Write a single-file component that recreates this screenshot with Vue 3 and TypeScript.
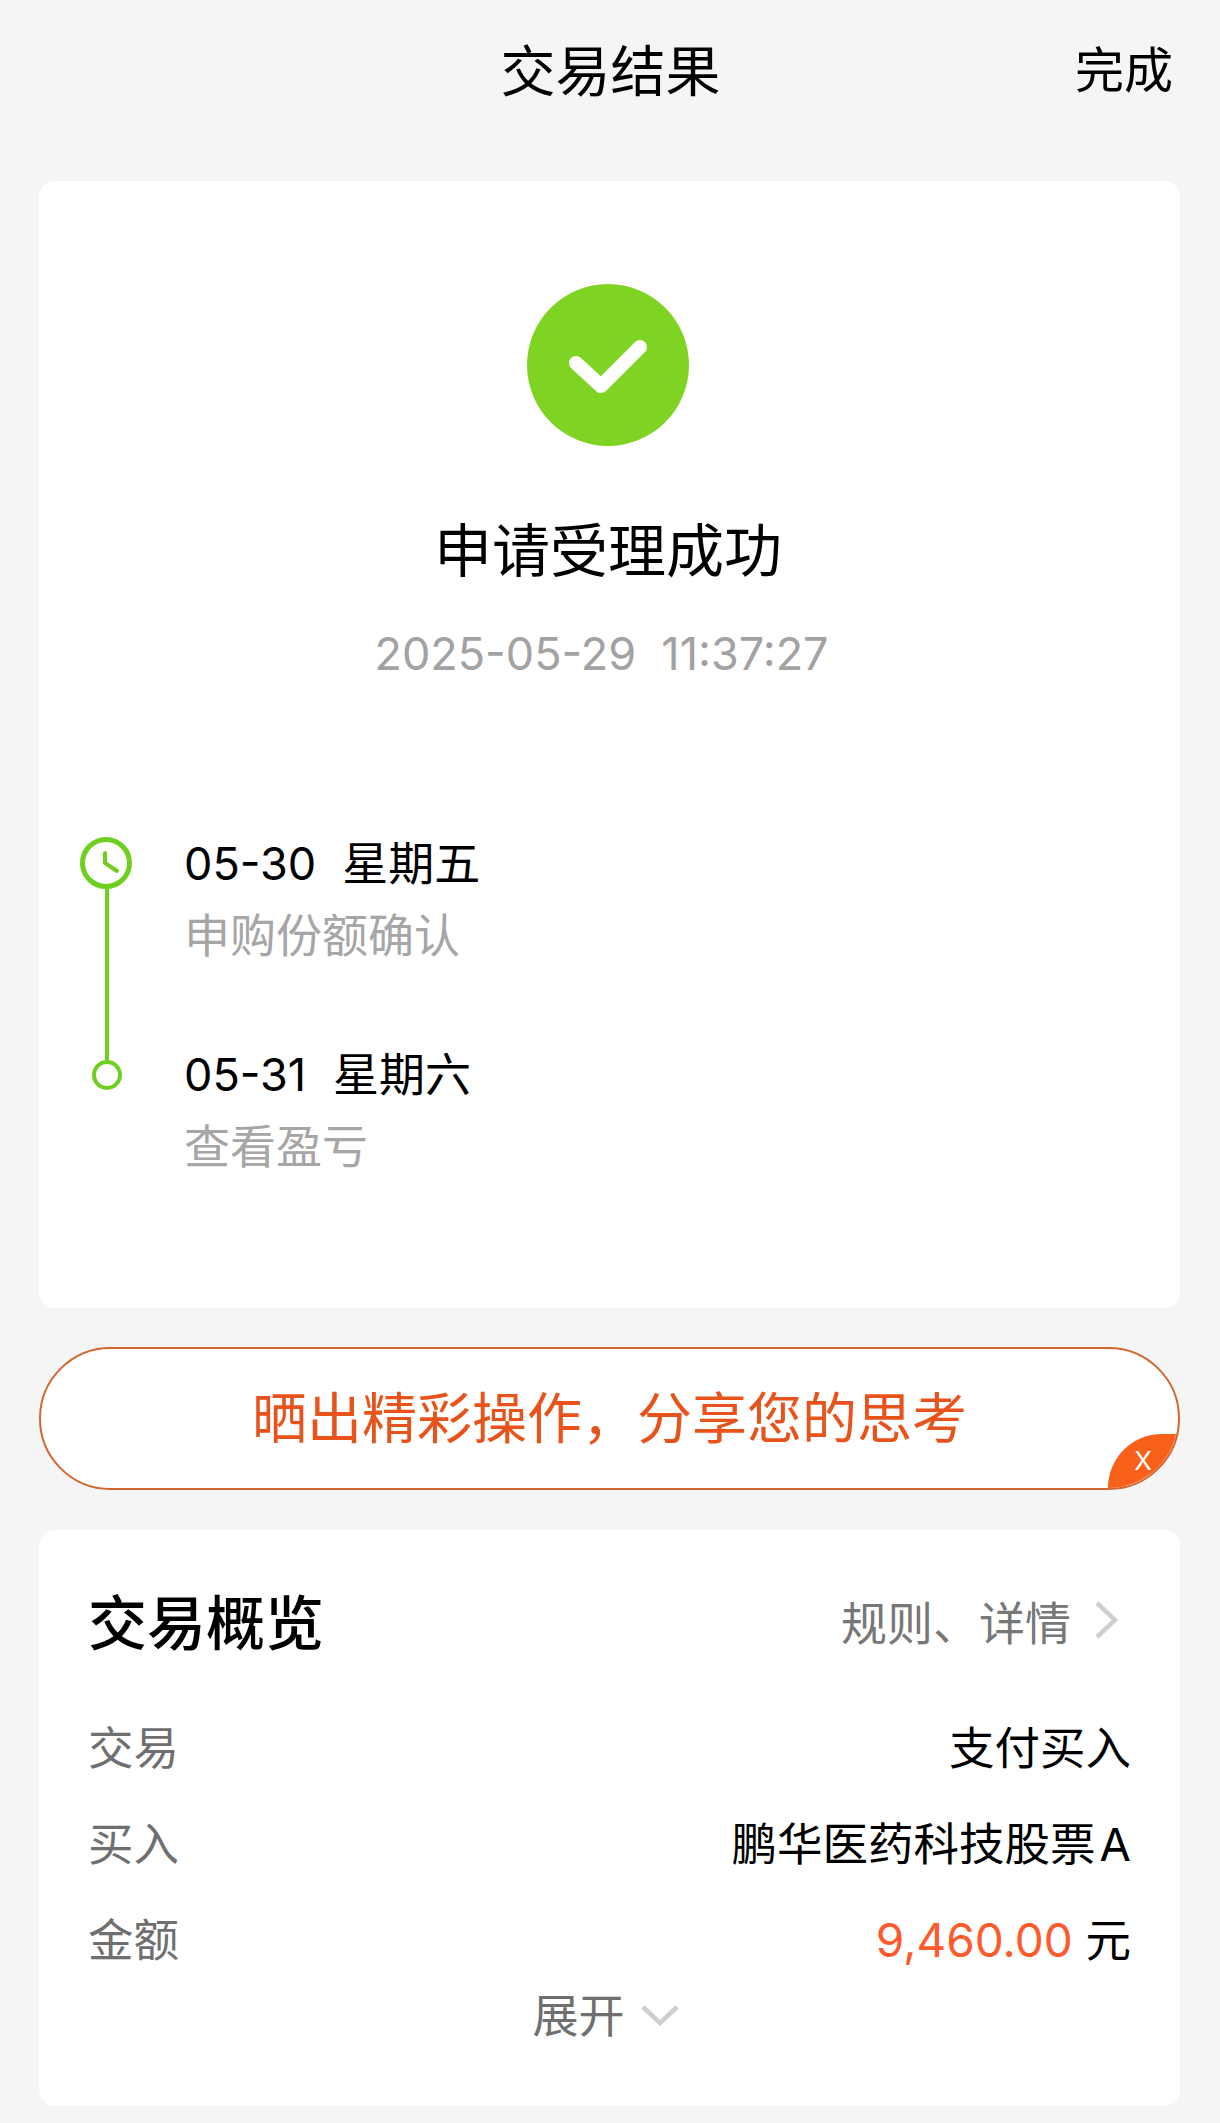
<script setup lang="ts">
type Step = {
  date: string
  weekday: string
  gap: number
  note: string
  icon: 'clock' | 'dot'
}

type Row = {
  label: string
  value: string
  amount?: string
}

const steps: Step[] = [
  { date: '05-30', weekday: '星期五', gap: 26, note: '申购份额确认', icon: 'clock' },
  { date: '05-31', weekday: '星期六', gap: 27, note: '查看盈亏', icon: 'dot' },
]

const rows: Row[] = [
  { label: '交易', value: '支付买入' },
  { label: '买入', value: '鹏华医药科技股票\u200aA' },
  { label: '金额', value: '元', amount: '9,460.00' },
]
</script>

<template>
  <main class="page">
    <header class="nav">
      <span></span>
      <h1 class="nav__title">交易结果</h1>
      <span class="nav__done">完成</span>
    </header>

    <section class="card result">
      <svg class="result__icon" viewBox="0 0 162 162" aria-hidden="true">
        <circle cx="81" cy="81" r="81" fill="#7fd322" />
        <path d="M49 79 L74 102 L113 63" fill="none" stroke="#fff" stroke-width="14" stroke-linecap="round" stroke-linejoin="round" />
      </svg>
      <h2 class="result__title">申请受理成功</h2>
      <p class="result__time">2025-05-29&nbsp;&nbsp;11:37:27</p>

      <ol class="steps">
        <li v-for="(step, index) in steps" :key="step.date" class="step">
          <div class="step__rail">
            <svg v-if="step.icon === 'clock'" class="step__clock" viewBox="0 0 52 52" aria-hidden="true">
              <circle cx="26" cy="26" r="23.5" fill="none" stroke="#6fcf1f" stroke-width="5" />
              <path d="M25 16 V26 L37 34" fill="none" stroke="#6fcf1f" stroke-width="4" stroke-linecap="round" stroke-linejoin="round" />
            </svg>
            <span v-else class="step__dot"></span>
            <span v-if="index < steps.length - 1" class="step__line"></span>
          </div>
          <div class="step__body">
            <div class="step__date">
              <span class="step__day">{{ step.date }}</span>
              <span :style="{ marginLeft: step.gap + 'px' }">{{ step.weekday }}</span>
            </div>
            <div class="step__note">{{ step.note }}</div>
          </div>
        </li>
      </ol>
    </section>

    <section class="share">
      <span class="share__text">晒出精彩操作，分享您的思考</span>
      <span class="share__close">X</span>
    </section>

    <section class="card overview">
      <div class="overview__head">
        <h3 class="overview__title">交易概览</h3>
        <div class="overview__link">
          <span>规则、详情</span>
          <svg class="overview__chevron" viewBox="0 0 26 40" aria-hidden="true">
            <path d="M4 3 L22 20 L4 37" fill="none" stroke="#cfcfcf" stroke-width="4.5" />
          </svg>
        </div>
      </div>

      <div v-for="row in rows" :key="row.label" class="row">
        <span class="row__label">{{ row.label }}</span>
        <span class="row__value">
          <span v-if="row.amount" class="row__amount">{{ row.amount }}</span>
          {{ row.value }}
        </span>
      </div>

      <div class="expand">
        <span>展开</span>
        <svg class="expand__chevron" viewBox="0 0 38 22" aria-hidden="true">
          <path d="M2 3 L19 19 L36 3" fill="none" stroke="#cfcfcf" stroke-width="4.5" />
        </svg>
      </div>
    </section>
  </main>
</template>

<style>
html,
body {
  margin: 0;
  background: #f5f5f5;
}
</style>

<style scoped>
.page {
  box-sizing: border-box;
  width: 1220px;
  height: 2123px;
  padding: 0 40px 0 39px;
  overflow: hidden;
  background: #f5f5f5;
  color: #000;
  font-family: Inter, "Noto Sans CJK SC", sans-serif;
}

h1,
h2,
h3,
p,
ol {
  margin: 0;
  padding: 0;
  font-weight: 400;
}

.nav {
  display: grid;
  grid-template-columns: 1fr auto 1fr;
  align-items: center;
  height: 140px;
  padding: 0 7px 0 9px;
}

.nav__title {
  font-size: 55px;
  line-height: 142px;
}

.nav__done {
  font-size: 49px;
  line-height: 138px;
  text-align: right;
}

.card {
  background: #fff;
  border-radius: 16px;
}

.result {
  box-sizing: border-box;
  display: flex;
  flex-direction: column;
  align-items: center;
  height: 1127px;
  margin-top: 41px;
  padding-top: 103px;
}

.result__icon {
  width: 162px;
  height: 162px;
  margin-right: 4px;
}

.result__title {
  margin-top: 65px;
  margin-right: 3px;
  font-size: 58px;
  line-height: 80px;
}

.result__time {
  margin-top: 32px;
  margin-right: 16px;
  font-size: 45px;
  line-height: 62px;
  color: #a2a2a2;
}

.steps {
  align-self: stretch;
  margin-top: 152px;
  padding-left: 41px;
  list-style: none;
}

.step {
  display: flex;
  gap: 52px;
  height: 211px;
}

.step__rail {
  display: flex;
  flex-direction: column;
  align-items: center;
  flex: none;
  width: 52px;
}

.step__clock {
  flex: none;
  width: 52px;
  height: 52px;
}

.step__line {
  flex: 1;
  width: 4px;
  margin: 0 0 -12px 2px;
  background: #6fcf1f;
}

.step__dot {
  box-sizing: border-box;
  width: 30px;
  height: 30px;
  margin: 12px 0 0 2px;
  border: 4px solid #6fcf1f;
  border-radius: 50%;
}

.step__date {
  font-size: 46px;
  line-height: 52px;
}

.step__day {
  font-size: 45px;
}

.step__note {
  margin-top: 19px;
  font-size: 46px;
  line-height: 52px;
  color: #a6a6a6;
}

.share {
  box-sizing: border-box;
  position: relative;
  display: flex;
  align-items: center;
  justify-content: center;
  height: 143px;
  margin-top: 39px;
  padding-bottom: 10px;
  overflow: hidden;
  background: #fff;
  border: 2px solid #d2662f;
  border-radius: 72px;
}

.share__text {
  font-size: 55px;
  color: #e8531b;
}

.share__close {
  position: absolute;
  right: 0;
  bottom: 0;
  width: 70px;
  height: 54px;
  background: #f9601a;
  border-radius: 54px 0 0 0;
  color: #fff;
  font-size: 26px;
  line-height: 54px;
  text-align: center;
}

.overview {
  box-sizing: border-box;
  height: 576px;
  margin-top: 40px;
  padding: 53px 49px 0 49px;
}

.overview__head {
  display: flex;
  align-items: center;
  justify-content: space-between;
  height: 72px;
  margin-bottom: 42px;
}

.overview__title {
  font-size: 59px;
  font-weight: 500;
}

.overview__link {
  display: flex;
  align-items: center;
  gap: 22px;
  padding: 2px 12px 0 0;
  font-size: 46px;
  color: #777;
}

.overview__chevron {
  width: 26px;
  height: 40px;
}

.row {
  display: flex;
  align-items: center;
  justify-content: space-between;
  height: 96px;
  font-size: 45.5px;
}

.row__label {
  color: #6f6f6f;
}

.row__amount {
  font-size: 46px;
  color: #ff5a2b;
}

.expand {
  display: flex;
  align-items: center;
  justify-content: center;
  gap: 16px;
  margin: 4px 8px 0 0;
  font-size: 46px;
  line-height: 52px;
  color: #6f6f6f;
}

.expand__chevron {
  width: 38px;
  height: 22px;
}
</style>
